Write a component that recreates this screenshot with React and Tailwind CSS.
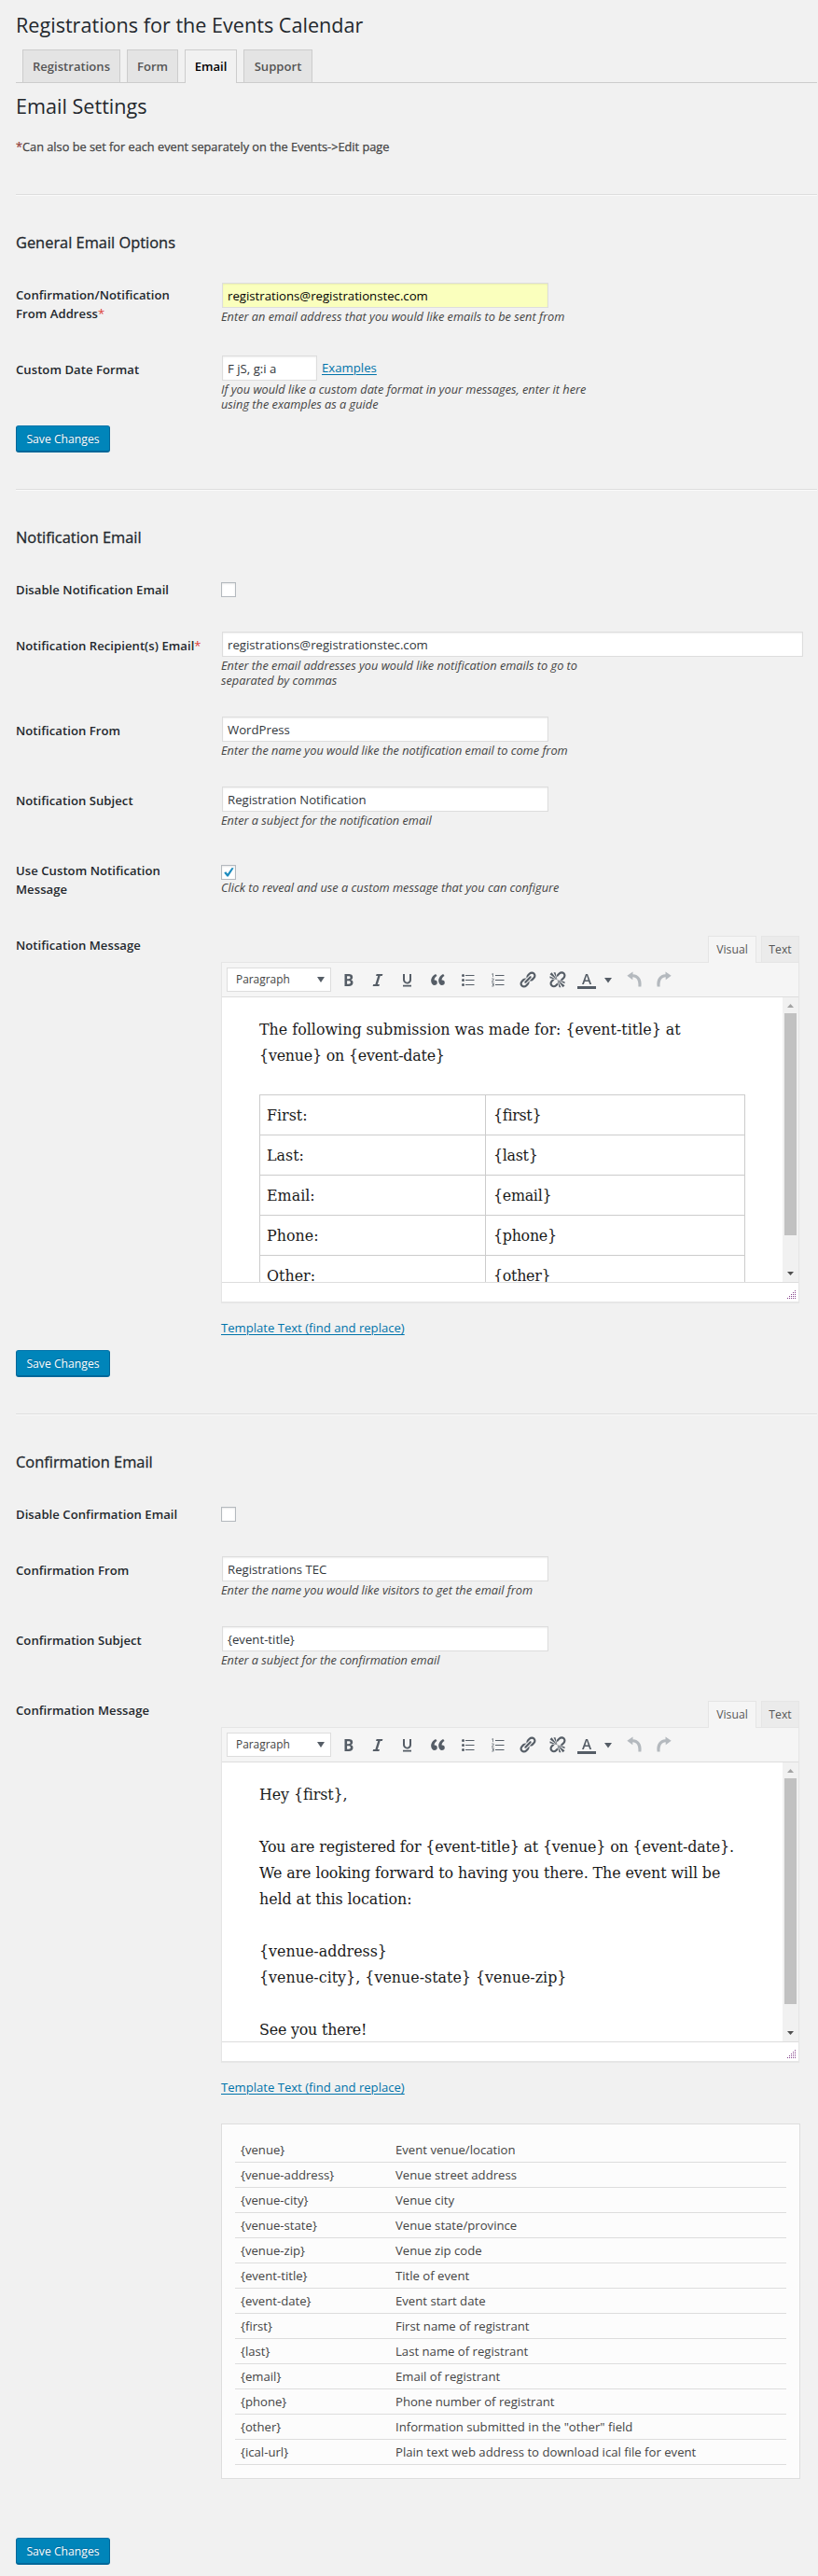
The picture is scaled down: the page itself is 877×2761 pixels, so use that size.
const TABS = [
  { name: "Registrations", width: "w-[105px]" },
  { name: "Form", width: "w-[55px]" },
  { name: "Email", width: "w-[56px]", active: true },
  { name: "Support", width: "w-[74px]" },
];

const SUBMISSION = [
  ["First:", "{first}"],
  ["Last:", "{last}"],
  ["Email:", "{email}"],
  ["Phone:", "{phone}"],
  ["Other:", "{other}"],
];

const TOKENS = [
  ["{venue}", "Event venue/location"],
  ["{venue-address}", "Venue street address"],
  ["{venue-city}", "Venue city"],
  ["{venue-state}", "Venue state/province"],
  ["{venue-zip}", "Venue zip code"],
  ["{event-title}", "Title of event"],
  ["{event-date}", "Event start date"],
  ["{first}", "First name of registrant"],
  ["{last}", "Last name of registrant"],
  ["{email}", "Email of registrant"],
  ["{phone}", "Phone number of registrant"],
  ["{other}", 'Information submitted in the "other" field'],
  ["{ical-url}", "Plain text web address to download ical file for event"],
];

function Heading({ children }) {
  return (
    <h2 className="text-[21.6px] leading-[29px] font-normal whitespace-nowrap text-[#23282d]">{children}</h2>
  );
}

function SectionHeading({ children }) {
  return (
    <h3 className="mt-[38px] mb-[14px] text-[16.4px] leading-[24px] font-normal whitespace-nowrap text-[#23282d] [-webkit-text-stroke:0.3px_#23282d]">
      {children}
    </h3>
  );
}

function Star() {
  return <span className="font-normal text-[#dd3d36]">*</span>;
}

function Rule({ space = "mt-[39px]" }) {
  return <div className={`h-[2px] w-[859px] border-t border-[#ddd] bg-[#fafafa] ${space}`} />;
}

function Row({ height, label, children, pad = "pt-[15px]" }) {
  return (
    <div className={`flex w-[859px] ${height}`}>
      <div className="w-[220px] shrink-0 pt-[20px] text-[13.1px] leading-[20px] font-semibold tracking-[0.05px] whitespace-nowrap text-[#23282d]">
        {label}
      </div>
      <div className={`min-w-0 flex-1 ${pad}`}>{children}</div>
    </div>
  );
}

function Input({ width = "w-[350px]", tone = "bg-white text-[#32373c]", children }) {
  return (
    <div
      className={`ml-px h-[27px] border border-[#ddd] pl-[5px] text-[13.2px] leading-[26px] whitespace-nowrap shadow-[inset_0_1px_2px_rgba(0,0,0,0.07)] ${width} ${tone}`}
    >
      {children}
    </div>
  );
}

function Desc({ space = "mt-px", children }) {
  return (
    <p className={`text-[12.76px] leading-[16px] whitespace-nowrap text-[#444] italic ${space}`}>{children}</p>
  );
}

function Check({ on }) {
  return (
    <div className="flex h-4 w-4 items-center justify-center border border-[#b4b9be] bg-white shadow-[inset_0_1px_2px_rgba(0,0,0,0.1)]">
      {on && (
        <svg width="12" height="12" viewBox="0 0 12 12">
          <path d="M1.2 6.6 L3.2 5.2 L5 7.6 L9.6 1 L11.6 1.6 L5.8 10.6 L4.4 10.6 Z" fill="#1e8cbe" />
        </svg>
      )}
    </div>
  );
}

function Save() {
  return (
    <button className="block h-[29px] w-[101px] rounded-[3px] border border-b-2 border-[#006799] border-t-[#0073aa] bg-[#0085ba] text-[12.2px] leading-[25px] whitespace-nowrap text-white [text-shadow:0_-1px_1px_#006799]">
      Save Changes
    </button>
  );
}

function Link({ children }) {
  return <a className="text-[#0073aa] underline decoration-1 underline-offset-2">{children}</a>;
}

function Icons() {
  return (
    <svg className="ml-[8px]" width="370" height="30" viewBox="0 0 370 30" fill="#555d66">
      <g transform="translate(-0.5 5)">
        <path d="M7 4v13h4.540c1.370 0 2.460-.33 3.260-1 .8-.66 1.200-1.580 1.200-2.770 0-.84-.17-1.510-.51-2.010s-.9-.85-1.670-1.030v-.09c.57-.1 1.020-.4 1.360-.9s.51-1.130.51-1.910c0-1.140-.39-1.980-1.170-2.500C13.750 4.260 12.500 4 10.790 4H7zm2.570 5.150V6.260h1.360c.73 0 1.270.11 1.610.32.34.22.51.58.51 1.070 0 .54-.16.92-.47 1.150s-.82.35-1.510.35h-1.500zm0 2.190h1.600c1.440 0 2.160.53 2.160 1.610 0 .6-.17 1.050-.51 1.340s-.86.43-1.570.43H9.570v-3.380z" />
      </g>
      <g transform="translate(32 5)">
        <path d="M14.780 6h-2.130l-2.800 9h2.120l-.62 2H4.600l.62-2h2.140l2.800-9H8.030l.62-2h6.750z" />
      </g>
      <g transform="translate(64 4)">
        <path d="M14 5h-2v5.710c0 1.990-1.120 2.980-2.450 2.980-1.320 0-2.550-1-2.550-2.960V5H5v5.870c0 1.910 1 4.540 4.480 4.540 3.490 0 4.520-2.580 4.520-4.500V5zm0 13.500v-1.700H5v1.700h9z" />
      </g>
      <g transform="translate(98.5 7.400) scale(.85)">
        <path d="M8.540 12.740c0-.87-.24-1.610-.72-2.220-.73-.92-2.140-1.030-2.960-.85-.34-1.930 1.300-4.390 3.420-5.450L6.650 1.940C3.450 3.460.31 6.960.85 11.370 1.190 14.160 2.800 16 5.080 16c1 0 1.830-.29 2.480-.88.660-.59.980-1.380.98-2.380zm9.430 0c0-.87-.24-1.610-.72-2.220-.73-.92-2.140-1.030-2.960-.85-.34-1.930 1.300-4.390 3.420-5.450l-1.630-2.280c-3.200 1.520-6.340 5.020-5.800 9.430.34 2.790 1.950 4.630 4.230 4.630 1 0 1.830-.29 2.480-.88.660-.59.980-1.380.98-2.380z" />
      </g>
      <g>
        <circle cx="133.5" cy="10.5" r="1.5" />
        <circle cx="133.5" cy="15.5" r="1.5" />
        <circle cx="133.5" cy="20.5" r="1.5" />
        <path d="M136 10h9.500v1H136zM136 15h9.500v1H136zM136 20h9.500v1H136z" />
      </g>
      <g>
        <path d="M168 10h9.500v1H168zM168 15h9.500v1H168zM168 20h9.500v1H168z" />
        <path
          d="M164.200 9.300l1.300-.8v3.700M164.200 14h2v1.300l-2 1.700h2.300M164.200 18.800h2v1.500h-1.200h1.200v1.700h-2"
          fill="none"
          stroke="#555d66"
          strokeWidth=".7"
        />
      </g>
      <g transform="translate(192.5 5)">
        <path d="M17.740 2.760c1.680 1.690 1.680 4.410 0 6.100l-1.530 1.520c-1.120 1.120-2.700 1.470-4.140 1.090l2.620-2.610.76-.77.76-.76c.84-.84.84-2.200 0-3.040-.84-.85-2.200-.85-3.040 0l-.77.76-3.380 3.380c-.37-1.440-.02-3.020 1.100-4.140l1.520-1.530c1.690-1.680 4.420-1.680 6.100 0zM8.590 13.430l5.340-5.340c.42-.42.42-1.100 0-1.520-.44-.43-1.130-.39-1.530 0l-5.330 5.340c-.42.42-.42 1.100 0 1.520.44.43 1.130.39 1.520 0zm-.76 2.290l4.140-4.150c.38 1.440.03 3.020-1.090 4.140l-1.520 1.530c-1.690 1.680-4.410 1.680-6.100 0-1.680-1.680-1.680-4.420 0-6.100l1.530-1.520c1.120-1.120 2.700-1.470 4.140-1.100l-4.140 4.150c-.85.84-.85 2.200 0 3.050.84.84 2.200.84 3.040 0z" />
      </g>
      <g transform="translate(224.500 5.300)">
        <path d="M17.740 2.260c1.680 1.690 1.680 4.410 0 6.100l-1.530 1.520c-.32.33-.69.58-1.080.77L13 10l1.690-1.640.76-.77.76-.76c.84-.84.84-2.200 0-3.040-.84-.85-2.200-.85-3.040 0l-.77.76-.76.76L10 7l-.65-2.140c.19-.38.44-.75.77-1.070l1.520-1.530c1.690-1.680 4.420-1.680 6.100 0zM2 4l8 6-6-8zm4-2l4 8-2-8H6zM2 6l8 4-8-2V6zm7.360 7.690L10 13l.74 2.350-1.380 1.390c-1.690 1.680-4.410 1.680-6.100 0-1.680-1.680-1.680-4.420 0-6.100l1.390-1.380L7 10l-.69.64-1.520 1.530c-.85.84-.85 2.200 0 3.040.84.85 2.200.85 3.040 0zM18 16l-8-6 6 8zm-4 2l-4-8 2 8h2zm4-4l-8-4 8 2v2z" />
      </g>
      <g transform="translate(256 5)">
        <path d="M13.230 15h1.900L11 4H9L5 15h1.880l1.070-3h4.180zm-1.530-4.540H8.510L10 5.600z" />
        <path d="M0 17h20v3H0z" />
      </g>
      <path d="M285 13h8l-4 5.500z" />
      <g fill="#b4b9be">
        <path d="M6.500 0 L0.300 4.300 L6.300 8.800 V5.800 C10.500 6 12.800 9 12.400 16 H15.400 C16.600 8 12.800 3 6.500 2.800 Z" transform="translate(309 6.500)" />
        <path d="M6.500 0 L0.300 4.300 L6.300 8.800 V5.800 C10.500 6 12.800 9 12.400 16 H15.400 C16.600 8 12.800 3 6.500 2.800 Z" transform="translate(357 6.500) scale(-1 1)" />
      </g>
    </svg>
  );
}

function Toolbar() {
  return (
    <div className="flex h-[37px] items-center border-b border-[#ddd] bg-[#f5f5f5] pl-[5px]">
      <div className="flex h-[26px] w-[112px] items-center justify-between border border-[#ddd] bg-white pr-[6px] pl-[9px] text-[11.9px] text-[#444]">
        Paragraph
        <svg width="8" height="6" viewBox="0 0 8 6">
          <path d="M0 0h8L4 6z" fill="#555d66" />
        </svg>
      </div>
      <Icons />
    </div>
  );
}

function Scroll({ thumb }) {
  return (
    <div className="flex w-[17px] shrink-0 flex-col items-center justify-between bg-[#f1f1f1] py-[7px]">
      <div className="flex flex-col items-center gap-[6px]">
        <svg width="7" height="4" viewBox="0 0 7 4">
          <path d="M0 4h7L3.500 0z" fill="#a3a3a3" />
        </svg>
        <div className={`w-[13px] bg-[#c1c1c1] ${thumb}`} />
      </div>
      <svg width="7" height="4" viewBox="0 0 7 4">
        <path d="M0 0h7L3.500 4z" fill="#505050" />
      </svg>
    </div>
  );
}

function Grip() {
  const dots = [];
  for (let r = 0; r < 5; r++) {
    for (let c = 4 - r; c < 5; c++) dots.push([c * 2, r * 2]);
  }
  return (
    <svg width="9" height="9" viewBox="0 0 9 9" fill="#84408a">
      {dots.map(([x, y]) => (
        <rect key={`${x}-${y}`} x={x} y={y} width="1" height="1" />
      ))}
    </svg>
  );
}

function Editor({ height, thumb, children }) {
  return (
    <div className="w-[620px]">
      <div className="flex h-[28px] items-stretch justify-end gap-[5px] text-[12.2px] leading-[19px] text-[#555]">
        <div className="relative z-10 -mb-px flex w-[52px] justify-center border border-b-0 border-[#e5e5e5] bg-[#f5f5f5] pt-[4px]">
          Visual
        </div>
        <div className="flex w-[41px] justify-center border border-b-0 border-[#e5e5e5] bg-[#ebebeb] pt-[4px]">
          Text
        </div>
      </div>
      <div className="border border-[#e5e5e5] bg-white shadow-[0_1px_1px_rgba(0,0,0,0.04)]">
        <Toolbar />
        <div className={`flex overflow-hidden ${height}`}>
          <div className="flex-1 overflow-hidden pt-[21px] pl-[40px] font-['DejaVu_Serif',serif] text-[15.9px] leading-[28px] whitespace-nowrap text-[#1a1a1a]">
            {children}
          </div>
          <Scroll thumb={thumb} />
        </div>
        <div className="flex h-[21px] justify-end border-t border-[#ddd] pt-[8px] pr-[3px]">
          <Grip />
        </div>
      </div>
    </div>
  );
}

export default function App() {
  return (
    <div className="h-[2761px] w-[877px] overflow-hidden bg-[#f1f1f1] pt-[12px] pl-[17px] font-['Open_Sans',sans-serif]">
      <Heading>Registrations for the Events Calendar</Heading>

      <div className="mt-[12px] flex h-[36px] w-[859px] gap-[7px] border-b border-[#ccc] pl-[7px]">
        {TABS.map((t) => (
          <div
            key={t.name}
            className={`flex justify-center border border-b-0 border-[#ccc] pt-[7px] text-[13.1px] leading-[21px] font-semibold ${t.width} ${
              t.active ? "-mb-px bg-[#f1f1f1] text-black" : "bg-[#e4e4e4] text-[#555]"
            }`}
          >
            {t.name}
          </div>
        ))}
      </div>

      <div className="mt-[10px]">
        <Heading>Email Settings</Heading>
      </div>
      <p className="mt-[19px] text-[12.76px] leading-[20px] whitespace-nowrap text-[#444] [-webkit-text-stroke:0.25px_#444]">
        <Star />
        Can also be set for each event separately on the Events-&gt;Edit page
      </p>

      <Rule space="mt-[41px]" />
      <SectionHeading>General Email Options</SectionHeading>
      <Row
        height="h-[80px]"
        pad="pt-[17px]"
        label={
          <>
            Confirmation/Notification
            <br />
            From Address
            <Star />
          </>
        }
      >
        <Input tone="bg-[#faffbd] text-black">registrations@registrationstec.com</Input>
        <Desc>Enter an email address that you would like emails to be sent from</Desc>
      </Row>
      <Row height="h-[90px]" label="Custom Date Format">
        <div className="flex gap-[5px] text-[13.2px] leading-[26px]">
          <Input width="w-[102px]">F jS, g:i a</Input>
          <Link>Examples</Link>
        </div>
        <Desc>
          If you would like a custom date format in your messages, enter it here
          <br />
          using the examples as a guide
        </Desc>
      </Row>
      <Save />

      <Rule />
      <SectionHeading>Notification Email</SectionHeading>
      <Row height="h-[60px]" label="Disable Notification Email" pad="pt-[22px]">
        <Check />
      </Row>
      <Row
        height="h-[91px]"
        label={
          <>
            Notification Recipient(s) Email
            <Star />
          </>
        }
      >
        <Input width="w-[623px]">registrations@registrationstec.com</Input>
        <Desc>
          Enter the email addresses you would like notification emails to go to
          <br />
          separated by commas
        </Desc>
      </Row>
      <Row height="h-[75px]" label="Notification From">
        <Input>WordPress</Input>
        <Desc>Enter the name you would like the notification email to come from</Desc>
      </Row>
      <Row height="h-[75px]" label="Notification Subject">
        <Input>Registration Notification</Input>
        <Desc>Enter a subject for the notification email</Desc>
      </Row>
      <Row
        height="h-[80px]"
        pad="pt-[24px]"
        label={
          <>
            Use Custom Notification
            <br />
            Message
          </>
        }
      >
        <Check on />
        <Desc space="mt-0">Click to reveal and use a custom message that you can configure</Desc>
      </Row>
      <Row height="h-[464px]" label="Notification Message" pad="pt-[20px]">
        <Editor height="h-[305px]" thumb="h-[238px]">
          <p>{"The following submission was made for: {event-title} at"}</p>
          <p className="tracking-[-0.22px]">{"{venue} on {event-date}"}</p>
          <div className="mt-[27px] w-[521px] border-t border-l border-[#ccc]">
            {SUBMISSION.map(([name, value]) => (
              <div key={name} className="flex h-[43px] border-b border-[#ccc] leading-[43px]">
                <div className="w-[242px] border-r border-[#ccc] pl-[7px]">{name}</div>
                <div className="flex-1 border-r border-[#ccc] pl-[8px] tracking-[-0.3px]">{value}</div>
              </div>
            ))}
          </div>
        </Editor>
        <p className="mt-[17px] text-[13.1px] leading-[20px]">
          <Link>Template Text (find and replace)</Link>
        </p>
      </Row>
      <Save />

      <Rule />
      <SectionHeading>Confirmation Email</SectionHeading>
      <Row height="h-[60px]" label="Disable Confirmation Email" pad="pt-[22px]">
        <Check />
      </Row>
      <Row height="h-[75px]" label="Confirmation From">
        <Input>Registrations TEC</Input>
        <Desc>Enter the name you would like visitors to get the email from</Desc>
      </Row>
      <Row height="h-[75px]" label="Confirmation Subject">
        <Input>{"{event-title}"}</Input>
        <Desc>Enter a subject for the confirmation email</Desc>
      </Row>
      <Row height="h-[917px]" label="Confirmation Message" pad="pt-[20px]">
        <Editor height="h-[299px]" thumb="h-[242px]">
          <p className="mb-[28px] tracking-[-0.1px]">{"Hey {first},"}</p>
          <p className="tracking-[-0.16px]">
            {"You are registered for {event-title} at {venue} on {event-date}."}
          </p>
          <p className="mb-[28px] tracking-[-0.09px]">
            We are looking forward to having you there. The event will be
            <br />
            held at this location:
          </p>
          <p className="mb-[28px]">
            {"{venue-address}"}
            <br />
            {"{venue-city}, {venue-state} {venue-zip}"}
          </p>
          <p className="tracking-[-0.2px]">See you there!</p>
        </Editor>
        <p className="mt-[17px] text-[13.1px] leading-[20px]">
          <Link>Template Text (find and replace)</Link>
        </p>
        <div className="mt-[29px] h-[381px] w-[621px] border border-[#ddd] bg-[#fcfcfc] px-[14px] pt-[14px] text-[13.15px] leading-[27px] text-[#444]">
          {TOKENS.map(([token, meaning]) => (
            <div key={token} className="flex h-[27px] border-b border-[#ddd] pl-[6px]">
              <div className="w-[166px]">{token}</div>
              <div>{meaning}</div>
            </div>
          ))}
        </div>
      </Row>
      <Save />
    </div>
  );
}
